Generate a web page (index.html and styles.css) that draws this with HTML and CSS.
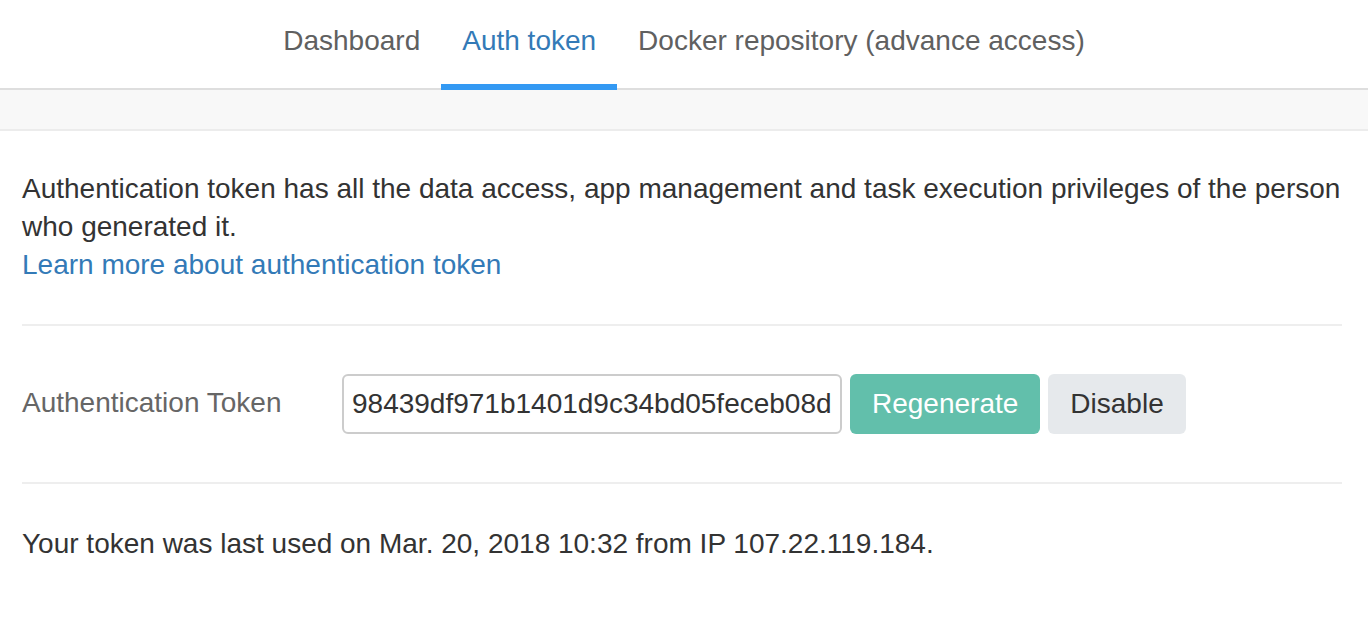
FILE: index.html
```html
<!DOCTYPE html>
<html>
<head>
<meta charset="utf-8">
<link rel="stylesheet" href="styles.css">
</head>
<body>
<nav class="tabs">
  <a class="tab">Dashboard</a>
  <a class="tab active">Auth token</a>
  <a class="tab">Docker repository (advance access)</a>
</nav>
<div class="band"></div>
<main class="content">
  <p class="intro">Authentication token has all the data access, app management and task execution privileges of the person who generated it.<br><a class="link">Learn more about authentication token</a></p>
  <hr class="rule">
  <div class="token-row">
    <label class="token-label">Authentication Token</label>
    <input class="token-input" type="text" value="98439df971b1401d9c34bd05feceb08d" readonly>
    <button class="btn btn-primary">Regenerate</button>
    <button class="btn btn-default">Disable</button>
  </div>
  <hr class="rule">
  <p class="last-used">Your token was last used on Mar. 20, 2018 10:32 from IP 107.22.119.184.</p>
</main>
</body>
</html>
```
FILE: styles.css
```css
* { box-sizing: border-box; }
html, body { margin: 0; padding: 0; background: #fff; }
body {
  font-family: "Liberation Sans", Arial, Helvetica, sans-serif;
  font-size: 28px;
  line-height: 38px;
  color: #333;
}
.tabs {
  display: flex;
  justify-content: center;
  height: 90px;
  border-bottom: 2px solid #dedede;
}
.tab {
  display: block;
  height: 90px;
  padding: 22px 21px 0;
  margin-bottom: -2px;
  color: #606060;
  border-bottom: 6px solid transparent;
}
.tab.active {
  color: #337ab7;
  border-bottom-color: #3399f3;
}
.band {
  height: 41px;
  background: #f8f8f8;
  border-bottom: 2px solid #ececec;
}
.content {
  padding: 39px 26px 0 22px;
}
.intro { margin: 0; }
.link { color: #337ab7; text-decoration: none; }
.rule {
  border: 0;
  border-top: 2px solid #eeeeee;
  margin: 40px 0 0;
  height: 0;
}
.token-row {
  display: flex;
  align-items: center;
  gap: 8px;
  margin: 48px 0 48px;
}
.token-label {
  width: 312px;
  color: #666;
  margin-top: -2px;
}
.token-input {
  width: 500px;
  height: 60px;
  border: 2px solid #cccccc;
  border-radius: 6px;
  padding: 0 8px;
  font-family: inherit;
  font-size: 28px;
  color: #333;
  background: #fff;
  outline: none;
}
.btn {
  height: 60px;
  border: 0;
  border-radius: 6px;
  font-family: inherit;
  font-size: 28px;
  padding: 0 22px;
}
.btn-primary { background: #62bfab; color: #fff; }
.btn-default { background: #e6e9ec; color: #333; }
.last-used { margin: 41px 0 0; }
```
